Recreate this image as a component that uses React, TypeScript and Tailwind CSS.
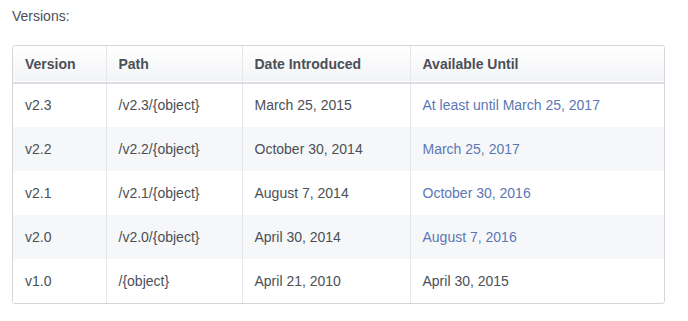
import React from 'react';

type Row = { version: string; path: string; introduced: string; until: string; link: boolean };

const rows: Row[] = [
  { version: 'v2.3', path: '/v2.3/{object}', introduced: 'March 25, 2015', until: 'At least until March 25, 2017', link: true },
  { version: 'v2.2', path: '/v2.2/{object}', introduced: 'October 30, 2014', until: 'March 25, 2017', link: true },
  { version: 'v2.1', path: '/v2.1/{object}', introduced: 'August 7, 2014', until: 'October 30, 2016', link: true },
  { version: 'v2.0', path: '/v2.0/{object}', introduced: 'April 30, 2014', until: 'August 7, 2016', link: true },
  { version: 'v1.0', path: '/{object}', introduced: 'April 21, 2010', until: 'April 30, 2015', link: false },
];

const App: React.FC = () => {
  return (
    <div className="min-h-screen bg-white px-3 pt-[7px] text-[14px] text-[#4b4f56] font-['Liberation_Sans',Helvetica,Arial,sans-serif]">
      <p className="leading-[18px]">Versions:</p>

      <div className="mt-[20px] w-[653px] overflow-hidden rounded-[3px] border border-[#d3d6db]">
        <table className="w-full border-collapse text-left">
          <thead>
            <tr className="h-[37px] border-b-2 border-[#dadde1] bg-gradient-to-b from-white to-[#f3f4f6]">
              <th className="w-[93px] px-3 font-bold">Version</th>
              <th className="w-[136px] border-l border-[#e5e7ea] px-3 font-bold">Path</th>
              <th className="w-[168px] border-l border-[#e5e7ea] px-3 font-bold">Date Introduced</th>
              <th className="border-l border-[#e5e7ea] px-3 font-bold">Available Until</th>
            </tr>
          </thead>
          <tbody>
            {rows.map((r, i) => (
              <tr key={r.version} className={`h-[44px] ${i % 2 === 1 ? 'bg-[#f6f7f9]' : 'bg-white'}`}>
                <td className="px-3">{r.version}</td>
                <td className="border-l border-[#e5e7ea] px-3">{r.path}</td>
                <td className="border-l border-[#e5e7ea] px-3">{r.introduced}</td>
                <td className={`border-l border-[#e5e7ea] px-3 ${r.link ? 'text-[#5b77b5]' : ''}`}>{r.until}</td>
              </tr>
            ))}
          </tbody>
        </table>
      </div>
    </div>
  );
};

export default App;
